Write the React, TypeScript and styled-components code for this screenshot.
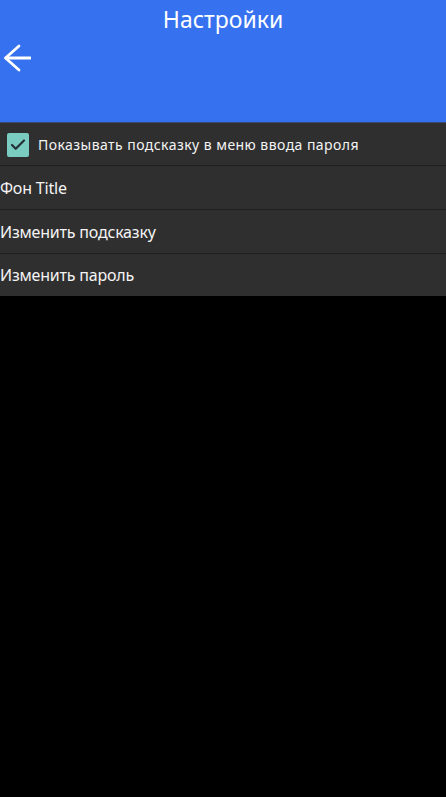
import React from 'react';
import styled, { createGlobalStyle } from 'styled-components';
import { Check } from 'lucide-react';

const GlobalStyle = createGlobalStyle`
  html, body {
    margin: 0;
    padding: 0;
    background: #000;
  }
`;

const Screen = styled.div`
  width: 446px;
  height: 797px;
  overflow: hidden;
  background: #000;
  color: #f4f4f4;
  font-family: 'Noto Sans', 'DejaVu Sans', sans-serif;
`;

const Header = styled.header`
  height: 122px;
  background: #3672ef;
  border-bottom: 1px solid #3a4a6a;
  display: flex;
  flex-direction: column;
`;

const Title = styled.h1`
  margin: 0;
  height: 40px;
  padding-top: 2px;
  box-sizing: border-box;
  text-align: center;
  font-size: 23px;
  line-height: 34px;
  font-weight: 400;
  color: #fff;
`;

const BackButton = styled.button`
  width: 38px;
  height: 36px;
  margin: 0;
  padding: 0 0 0 3px;
  border: none;
  background: none;
  display: flex;
  align-items: center;
`;

const List = styled.div`
  display: flex;
  flex-direction: column;
`;

const Row = styled.div<{ $height: number }>`
  height: ${(p) => p.$height}px;
  box-sizing: border-box;
  background: #2f2f2f;
  border-bottom: 1px solid #1f1f1f;
  display: flex;
  align-items: center;
  gap: 9px;
  padding-left: 0;
  font-size: 16px;
  letter-spacing: -0.2px;
  white-space: nowrap;
`;

const CheckRow = styled(Row)`
  padding-left: 7px;
  padding-top: 1px;
  font-size: 14px;
  letter-spacing: 0.45px;
`;

const CheckBox = styled.span`
  width: 22px;
  height: 24px;
  border-radius: 2px;
  background: #7accc0;
  color: #263238;
  display: flex;
  align-items: center;
  justify-content: center;
  flex: none;
`;

const LastRow = styled(Row)`
  border-bottom: none;
`;

export default function App() {
  return (
    <Screen>
      <GlobalStyle />
      <Header>
        <Title>Настройки</Title>
        <BackButton aria-label="Назад">
          <svg width="28" height="28" viewBox="0 0 28 28" fill="none" stroke="#fff" strokeWidth="2.8" strokeLinecap="round" strokeLinejoin="round">
            <path d="M27.500 14H3" />
            <path d="M16 2 2.500 14 16 26" />
          </svg>
        </BackButton>
      </Header>
      <List>
        <CheckRow $height={43}>
          <CheckBox>
            <Check size={18} strokeWidth={3} />
          </CheckBox>
          Показывать подсказку в меню ввода пароля
        </CheckRow>
        <Row $height={44}>Фон Title</Row>
        <Row $height={44}>Изменить подсказку</Row>
        <LastRow $height={42}>Изменить пароль</LastRow>
      </List>
    </Screen>
  );
}
